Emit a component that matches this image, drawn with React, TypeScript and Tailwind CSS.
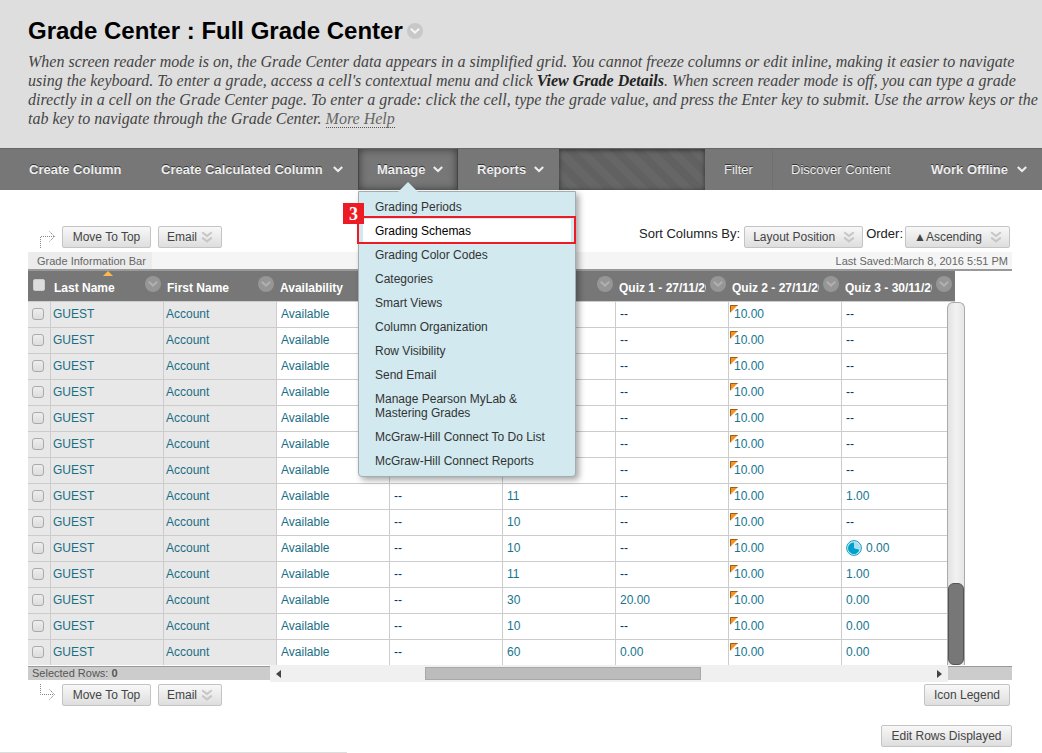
import React from 'react';

type Row = { bonus: string; attempts: string; quiz1: string; quiz3: string; inProgress?: boolean };

const rows: Row[] = [
  { bonus: '', attempts: '', quiz1: '--', quiz3: '--' },
  { bonus: '', attempts: '', quiz1: '--', quiz3: '--' },
  { bonus: '', attempts: '', quiz1: '--', quiz3: '--' },
  { bonus: '', attempts: '', quiz1: '--', quiz3: '--' },
  { bonus: '', attempts: '', quiz1: '--', quiz3: '--' },
  { bonus: '', attempts: '', quiz1: '--', quiz3: '--' },
  { bonus: '', attempts: '', quiz1: '--', quiz3: '--' },
  { bonus: '--', attempts: '11', quiz1: '--', quiz3: '1.00' },
  { bonus: '--', attempts: '10', quiz1: '--', quiz3: '--' },
  { bonus: '--', attempts: '10', quiz1: '--', quiz3: '0.00', inProgress: true },
  { bonus: '--', attempts: '11', quiz1: '--', quiz3: '1.00' },
  { bonus: '--', attempts: '30', quiz1: '20.00', quiz3: '0.00' },
  { bonus: '--', attempts: '10', quiz1: '--', quiz3: '0.00' },
  { bonus: '--', attempts: '60', quiz1: '0.00', quiz3: '0.00' },
];

const columns = ['Last Name', 'First Name', 'Availability', '', '', 'Quiz 1 - 27/11/20', 'Quiz 2 - 27/11/20', 'Quiz 3 - 30/11/20'];

const menuItems = [
  'Grading Periods',
  'Grading Schemas',
  'Grading Color Codes',
  'Categories',
  'Smart Views',
  'Column Organization',
  'Row Visibility',
  'Send Email',
  'Manage Pearson MyLab & Mastering Grades',
  'McGraw-Hill Connect To Do List',
  'McGraw-Hill Connect Reports',
];

const buttonClass =
  'flex h-[22px] items-center justify-center rounded-[2px] border border-[#c4c4c4] bg-linear-to-b from-[#f8f8f8] to-[#dedede] px-2 text-[12px] text-[#444]';

const Chevron: React.FC = () => (
  <svg width="10" height="7" viewBox="0 0 10 7" fill="none" stroke="currentColor" strokeWidth="2" aria-hidden="true">
    <path d="M0.8 1 L5 5 L9.2 1" />
  </svg>
);

const DoubleChevron: React.FC<{ className?: string }> = ({ className }) => (
  <svg className={className} width="12" height="12" viewBox="0 0 12 12" fill="none" stroke="#c6c6c6" strokeWidth="2" aria-hidden="true">
    <path d="M1.2 1.2 L6 5 L10.8 1.2 M1.2 6.6 L6 10.4 L10.8 6.6" />
  </svg>
);

const CircleChevron: React.FC<{ fill: string; stroke: string }> = ({ fill, stroke }) => (
  <svg width="16" height="16" viewBox="0 0 16 16" fill="none" aria-hidden="true">
    <circle cx="8" cy="8" r="8" fill={fill} />
    <path d="M3.8 5.8 L8 9.6 L12.2 5.8" stroke={stroke} strokeWidth="2" />
  </svg>
);

const DottedArrow: React.FC<{ up?: boolean }> = ({ up }) => (
  <svg width="16" height="22" viewBox="0 0 16 22" fill="none" stroke="#888" aria-hidden="true">
    <path d={up ? 'M0.5 24 V10.5 H14' : 'M0.5 -2 V10.5 H14'} strokeDasharray="1 1" />
    <path d="M9.5 5.5 L14.5 10.5 L9.5 15.5" strokeDasharray="1.4 0.8" />
  </svg>
);

const OverrideMark: React.FC = () => (
  <svg className="absolute left-px top-[3px]" width="8" height="8" viewBox="0 0 8 8" aria-hidden="true">
    <path d="M0 0 H8 L0 8 Z" fill="#f7931e" />
    <path d="M0.5 7 V0.5 H7.5" fill="none" stroke="#96601f" />
  </svg>
);

const InProgressIcon: React.FC = () => (
  <svg width="16" height="16" viewBox="0 0 16 16" aria-hidden="true">
    <circle cx="8" cy="8" r="7.4" fill="#c5ecf7" stroke="#1a9cc0" />
    <path d="M8 8 V2.4 A5.8 5.8 0 1 0 13.4 9.8 Z" fill="#00a0c8" />
    <path d="M8 2 A6 6 0 0 1 13.8 9.6 L8 8 Z" fill="#a4e0f2" />
  </svg>
);

const Value: React.FC<{ children: string }> = ({ children }) =>
  children === '--' ? <span className="text-[#003366]">--</span> : <a href="#" className="text-[#15758e]">{children}</a>;

const MoveButtons: React.FC<{ up?: boolean }> = ({ up }) => (
  <div className="flex pl-3">
    <DottedArrow up={up} />
    <button type="button" className={`${buttonClass} ml-[6px] min-w-[89px]`}>Move To Top</button>
    <button type="button" className={`${buttonClass} ml-[7px] gap-1`}>
      Email
      <DoubleChevron />
    </button>
  </div>
);

const SortSelect: React.FC<{ id: string; value: string; width: string }> = ({ id, value, width }) => (
  <div className={`relative ${width}`}>
    <select id={id} className={`${buttonClass} w-full appearance-none`}>
      <option>{value}</option>
    </select>
    <DoubleChevron className="pointer-events-none absolute right-2 top-[5px]" />
  </div>
);

const ManageMenu: React.FC = () => (
  <div className="absolute left-0 top-full z-20 mt-px w-[218px] rounded-b-[4px] border border-[#a3adb0] bg-[#d1e9ef] py-[3px] shadow-[3px_3px_6px_rgba(0,0,0,0.35)]">
    <svg className="absolute left-[39px] top-[-10px]" width="20" height="10" viewBox="0 0 20 10" aria-hidden="true">
      <path d="M10 0 L20 10 H0 Z" fill="#d1e9ef" />
    </svg>
    <ul className="px-1">
      {menuItems.map((item) => {
        const active = item === 'Grading Schemas';
        return (
          <li key={item} className="relative">
            <a
              href="#"
              className={`block px-3 py-[5px] text-[12px] leading-[14px] ${active ? 'bg-white text-black' : 'text-[#333]'}`}
            >
              {item}
            </a>
            {active && (
              <>
                <span className="absolute -left-[6px] -right-[5px] -top-[3px] bottom-[-1px] border-2 border-[#ed1c24]" />
                <span className="absolute -left-5 -top-4 flex h-[21px] w-[21px] items-center justify-center bg-[#ed1c24] pt-[2px] font-['Liberation_Serif',serif] text-[18px] font-bold text-white">
                  3
                </span>
              </>
            )}
          </li>
        );
      })}
    </ul>
  </div>
);

const navText = 'flex shrink-0 items-center text-[13px] text-[#eee] [text-shadow:0_-1px_0_#333]';

const ActionBar: React.FC = () => (
  <nav className="flex h-[42px] border-t border-[#666] bg-[#777]">
    <button type="button" className={`${navText} w-[142px] pl-[29px] font-bold`}>Create Column</button>
    <button type="button" className={`${navText} w-[216px] justify-between pl-[19px] pr-[15px] font-bold`}>
      Create Calculated Column
      <Chevron />
    </button>
    <div className="relative flex">
      <button
        type="button"
        className={`${navText} w-[100px] justify-between border-x border-[#444] bg-[#777] pl-[18px] pr-[14px] font-bold shadow-[inset_0_0_8px_rgba(0,0,0,0.5)]`}
      >
        Manage
        <Chevron />
      </button>
      <ManageMenu />
    </div>
    <button type="button" className={`${navText} w-[101px] justify-between pl-[19px] pr-[15px] font-bold`}>
      Reports
      <Chevron />
    </button>
    <div className="flex-1 bg-[repeating-linear-gradient(45deg,#616161_0px,#616161_8px,#666_8px,#666_16px)] shadow-[inset_0_1px_5px_rgba(0,0,0,0.5)]" />
    <button type="button" className={`${navText} w-[68px] border-r border-[#707070] pl-[19px]`}>Filter</button>
    <button type="button" className={`${navText} w-[139px] pl-[18px]`}>Discover Content</button>
    <button type="button" className={`${navText} w-[130px] justify-between pl-[19px] pr-[15px] font-bold`}>
      Work Offline
      <Chevron />
    </button>
  </nav>
);

const GradeTable: React.FC = () => (
  <div className="relative pr-[57px]">
    <table className="w-full table-fixed border-separate border-spacing-0 text-left text-[12px]">
      <thead>
        <tr className="h-[31px] bg-[#777]">
          <th className="w-[23px] border-b border-[#ccc] p-0 align-top">
            <input
              type="checkbox"
              aria-label="Select all rows"
              className="ml-[5px] mt-2 block h-3 w-3 appearance-none rounded-[2px] border border-[#ccc] bg-[#ddd]"
            />
          </th>
          {columns.map((name, i) => (
            <th key={i} className="relative border-b border-[#ccc] py-0 pl-[3px] pr-[23px] font-bold text-white">
              <span className="block overflow-hidden whitespace-nowrap pt-[3px]">{name}</span>
              {i === 0 && (
                <svg className="absolute left-[52px] top-0" width="10" height="5" viewBox="0 0 10 5" aria-hidden="true">
                  <path d="M5 0 L10 5 H0 Z" fill="#fdb94e" />
                </svg>
              )}
              <button type="button" aria-label={`${name} options`} className="absolute right-[3px] top-[5px]">
                <CircleChevron fill="#969696" stroke="#b0b0b0" />
              </button>
            </th>
          ))}
        </tr>
      </thead>
      <tbody className="[&_td]:border-b [&_td]:border-r [&_td]:border-[#ccc] [&_td]:pb-[2px] [&_td]:pt-0 [&_td:last-child]:border-r-0 [&_tr:last-child_td]:border-b-0">
        {rows.map((row, i) => (
          <tr key={i} className="h-[26px] last:h-[25px]">
            <td className="bg-[#e8e8e8]">
              <input
                type="checkbox"
                aria-label={`Select row ${i + 1}`}
                className="ml-1 block h-3 w-3 appearance-none rounded-[3px] border border-[#aaa] bg-linear-to-b from-[#eee] to-[#ddd]"
              />
            </td>
            <td className="bg-[#e8e8e8] pl-[2px]"><a href="#" className="text-[#1a6e84]">GUEST</a></td>
            <td className="bg-[#e8e8e8] pl-[2px]"><a href="#" className="text-[#1a6e84]">Account</a></td>
            <td className="pl-1"><a href="#" className="text-[#1a6e84]">Available</a></td>
            <td className="pl-1"><Value>{row.bonus}</Value></td>
            <td className="pl-1"><Value>{row.attempts}</Value></td>
            <td className="pl-1"><Value>{row.quiz1}</Value></td>
            <td className="relative pl-[5px]">
              <OverrideMark />
              <span className="relative"><Value>10.00</Value></span>
            </td>
            <td className="pl-1">
              <span className="flex items-center gap-1">
                {row.inProgress && <InProgressIcon />}
                <Value>{row.quiz3}</Value>
              </span>
            </td>
          </tr>
        ))}
      </tbody>
    </table>
    <div className="absolute bottom-0 right-[47px] top-[31px] flex w-[18px] flex-col justify-end rounded-t-[6px] border-x border-t border-[#aaa] bg-linear-to-r from-[#e2e2e2] via-[#f2f2f2] to-[#e6e6e6]">
      <div className="h-[82px] rounded-[6px] border border-[#555] bg-[#777]" />
    </div>
  </div>
);

const StatusBar: React.FC = () => (
  <div className="flex h-[17px] text-[11px] text-[#555]">
    <div className="mb-[2px] mt-px w-[242px] border-t border-[#999] bg-[#ccc] pl-1 leading-[13px]">
      Selected Rows: <b>0</b>
    </div>
    <div className="flex flex-1 items-center justify-between bg-[#f0f0f0] px-[6px]">
      <svg width="5" height="8" viewBox="0 0 5 8" aria-hidden="true"><path d="M5 0 V8 L0 4 Z" fill="#444" /></svg>
      <div className="ml-[7px] mr-[99px] h-[13px] w-[276px] border border-[#a8a8a8] bg-[#bcbcbc]" />
      <svg width="5" height="8" viewBox="0 0 5 8" aria-hidden="true"><path d="M0 0 V8 L5 4 Z" fill="#444" /></svg>
    </div>
    <div className="mb-[2px] mt-px w-16 border-t border-[#999] bg-[#ccc]" />
  </div>
);

const App: React.FC = () => {
  return (
    <div className="bg-white font-['Liberation_Sans',Arial,sans-serif] text-[#333]">
      <header className="bg-[#dedede] pb-5 pl-7 pt-4">
        <h1 className="flex items-center gap-1 text-[24px] font-bold leading-[30px] text-black">
          Grade Center : Full Grade Center
          <button type="button" aria-label="Grade Center options">
            <CircleChevron fill="#c8c8c8" stroke="#f4f4f4" />
          </button>
        </h1>
        <p className="mt-[6px] font-['Liberation_Serif',serif] text-[16px] italic leading-[19px] text-[#444]">
          When screen reader mode is on, the Grade Center data appears in a simplified grid. You cannot freeze columns or edit inline, making it easier to navigate
          <br />
          using the keyboard. To enter a grade, access a cell's contextual menu and click <b className="text-[#222]">View Grade Details</b>. When screen reader mode is off, you can type a grade
          <br />
          directly in a cell on the Grade Center page. To enter a grade: click the cell, type the grade value, and press the Enter key to submit. Use the arrow keys or the
          <br />
          tab key to navigate through the Grade Center.{' '}
          <a href="#" className="border-b border-dotted border-[#555] text-[#666]">More Help</a>
        </p>
      </header>

      <ActionBar />

      <main className="pl-7 pr-[30px] pt-9">
        <div className="flex justify-between">
          <MoveButtons up />
          <div className="flex pr-[2px] text-[13px] leading-4 text-[#222]">
            <label htmlFor="sort-by" className="mr-1">Sort Columns By:</label>
            <SortSelect id="sort-by" value="Layout Position" width="w-[119px]" />
            <label htmlFor="sort-order" className="ml-[3px] mr-[2px]">Order:</label>
            <SortSelect id="sort-order" value="▲Ascending" width="w-[105px]" />
          </div>
        </div>

        <div className="mt-1 flex h-[19px] justify-between border-b-2 border-[#999] bg-[#f5f5f5] text-[11px] leading-[18px] text-[#666]">
          <div className="w-[124px] bg-[#ececec] pl-[9px]">Grade Information Bar</div>
          <div className="pr-1">Last Saved:March 8, 2016 5:51 PM</div>
        </div>

        <GradeTable />
        <StatusBar />

        <div className="mt-[2px] flex justify-between">
          <MoveButtons />
          <button type="button" className={`${buttonClass} mr-[2px] min-w-[86px]`}>Icon Legend</button>
        </div>
        <div className="mt-[19px] flex justify-end">
          <button type="button" className={`${buttonClass} min-w-[131px]`}>Edit Rows Displayed</button>
        </div>
      </main>
      <hr className="mt-[5px] w-1/3 border-[#ddd]" />
    </div>
  );
};

export default App;
